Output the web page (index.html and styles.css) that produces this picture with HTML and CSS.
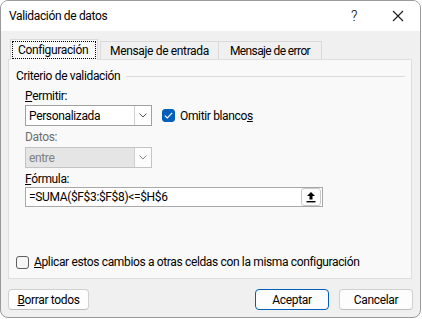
FILE: index.html
```html
<!DOCTYPE html>
<html lang="es">
<head>
  <meta charset="UTF-8" />
  <title>Validación de datos</title>
  <link rel="stylesheet" href="styles.css">
</head>
<body>
  <div class="window">
    <div class="titlebar">
      <span class="title">Validación de datos</span>
      <span class="help">?</span>
      <span class="close">
        <svg width="12" height="12" viewBox="0 0 12 12"><path d="M1 1L11 11M11 1L1 11" stroke="#1a1a1a" stroke-width="1.1" fill="none"/></svg>
      </span>
    </div>

    <div class="dialog">
      <div class="tabs">
        <div class="tab active"><span class="focus">Configuración</span></div>
        <div class="tab tab-entrada">Mensaje de entrada</div>
        <div class="tab tab-error">Mensaje de error</div>
      </div>

      <div class="panel">
        <div class="group-head">
          <span>Criterio de validación</span>
          <span class="rule"></span>
        </div>

        <div class="label"><u>P</u>ermitir:</div>
        <div class="row">
          <div class="select">
            <span class="value">Personalizada</span>
            <span class="arrow">
              <svg width="8" height="5" viewBox="0 0 8 5"><path d="M0.5 0.5L4 4L7.5 0.5" stroke="#555" fill="none"/></svg>
            </span>
          </div>
          <div class="check">
            <span class="box checked">
              <svg width="9" height="7" viewBox="0 0 9 7"><path d="M0.8 3.6L3.3 6L8.2 0.9" stroke="#fff" stroke-width="1.2" fill="none"/></svg>
            </span>
            <span>Omitir blanco<u>s</u></span>
          </div>
        </div>

        <div class="label disabled">Datos:</div>
        <div class="select disabled">
          <span class="value">entre</span>
          <span class="arrow">
            <svg width="8" height="5" viewBox="0 0 8 5"><path d="M0.5 0.5L4 4L7.5 0.5" stroke="#888" fill="none"/></svg>
          </span>
        </div>

        <div class="label formula-label"><u>F</u>órmula:</div>
        <div class="input">
          <span class="value">=SUMA($F$3:$F$8)&lt;=$H$6</span>
          <span class="ref-btn">
            <svg width="10" height="12" viewBox="0 0 10 12"><path d="M5 1L1 5H3.5V8.5H6.5V5H9Z" fill="#000"/><rect x="0.5" y="10" width="9" height="1.4" fill="#000"/></svg>
          </span>
        </div>

        <div class="check apply">
          <span class="box"></span>
          <span><u>A</u>plicar estos cambios a otras celdas con la misma configuración</span>
        </div>
      </div>

      <div class="footer">
        <button class="btn"><u>B</u>orrar todos</button>
        <div class="footer-right">
          <button class="btn primary">Aceptar</button>
          <button class="btn">Cancelar</button>
        </div>
      </div>
    </div>
  </div>
</body>
</html>
```

FILE: styles.css
```css
body {
  margin: 0;
  background: #fff;
  font-family: Roboto, "Liberation Sans", sans-serif;
  font-size: 12px;
  letter-spacing: -0.35px;
  color: #000;
}

.window {
  width: 421px;
  height: 318px;
  box-sizing: border-box;
  border: 1px solid #9a9a9a;
  border-radius: 8px;
  background: #f0f0f0;
  overflow: hidden;
}

.titlebar {
  height: 30px;
  background: #fff;
  display: flex;
  align-items: center;
  padding-left: 8px;
}

.title {
  flex: 1;
}

.help {
  width: 44px;
  text-align: center;
  font-size: 14px;
  font-weight: 300;
}

.close {
  width: 44px;
  display: flex;
  justify-content: center;
}

.dialog {
  padding: 9px 7px 0 7px;
}

/* tabs */
.tabs {
  display: flex;
  align-items: flex-end;
  padding-left: 2px;
  height: 19px;
  position: relative;
  z-index: 1;
}

.tab {
  flex-shrink: 0;
  height: 18px;
  box-sizing: border-box;
  border: 1px solid #d9d9d9;
  border-bottom: none;
  background: #f0f0f0;
  display: flex;
  align-items: center;
  justify-content: center;
  overflow: hidden;
  white-space: nowrap;
}

.tab-entrada {
  width: 119px;
}

.tab-error {
  width: 104px;
  margin-left: -1px;
  letter-spacing: -0.6px;
}

.tab.active {
  height: 21px;
  margin-bottom: -1px;
  margin-right: 2px;
  background: #f9f9f9;
  padding: 0 1px;
  width: 88px;
}

.focus {
  flex: 1;
  height: 16px;
  border: 1px dotted #000;
  display: flex;
  align-items: center;
  padding-left: 5px;
}

.panel {
  height: 220px;
  box-sizing: border-box;
  border: 1px solid #dedede;
  background: #f9f9f9;
  padding: 8px 0 0 16px;
  display: flex;
  flex-direction: column;
  margin-right: 1px;
}

.group-head {
  display: flex;
  align-items: center;
  height: 16px;
  margin-left: -9px;
  margin-right: 6px;
}

.rule {
  flex: 1;
  height: 1px;
  background: #dcdcdc;
  margin-left: 6px;
}

.label {
  height: 16px;
  line-height: 16px;
  margin-top: 4px;
}

.label.disabled {
  color: #6d6d6d;
  margin-top: 3px;
}

.formula-label {
  margin-top: 3px;
}

.row {
  display: flex;
  align-items: center;
  margin-top: 1px;
}

.select {
  width: 127px;
  height: 21px;
  box-sizing: border-box;
  border: 1px solid #a0a0a0;
  background: #fff;
  display: flex;
  align-items: stretch;
}

.select .value {
  flex: 1;
  padding-left: 3px;
  display: flex;
  align-items: center;
}

.select .arrow {
  width: 16px;
  border-left: 1px solid #cfcfcf;
  background: #fff;
  display: flex;
  align-items: center;
  justify-content: center;
}

.select.disabled {
  margin-top: 2px;
  background: #e5e5e5;
  border-color: #c4c4c4;
  color: #808080;
}

.select.disabled .arrow {
  background: #fcfcfc;
}

.check {
  display: flex;
  align-items: center;
}

.row .check {
  margin-left: 10px;
}

.box {
  width: 13px;
  height: 13px;
  box-sizing: border-box;
  border: 1px solid #5e5e5e;
  border-radius: 3px;
  margin-right: 5px;
  background: #f6f6f6;
  display: flex;
  align-items: center;
  justify-content: center;
}

.box.checked {
  background: #005fb8;
  border-color: #005fb8;
}

.input {
  width: 298px;
  height: 20px;
  box-sizing: border-box;
  border: 1px solid #a8a8a8;
  background: #fff;
  display: flex;
  align-items: center;
}

.input .value {
  flex: 1;
  padding-left: 3px;
}

.ref-btn {
  width: 20px;
  height: 18px;
  box-sizing: border-box;
  border: 1px solid #c8c8c8;
  border-radius: 3px;
  margin-right: 1px;
  background: #fdfdfd;
  display: flex;
  align-items: center;
  justify-content: center;
}

.check.apply {
  margin-top: auto;
  margin-bottom: 9px;
  margin-left: -9px;
}

.footer {
  display: flex;
  justify-content: space-between;
  margin-top: 10px;
}

.footer-right {
  display: flex;
  gap: 10px;
}

.btn {
  font-family: inherit;
  font-size: 12px;
  letter-spacing: inherit;
  color: #000;
  height: 21px;
  padding: 0;
  border: 1px solid #d0d0d0;
  border-bottom-color: #bdbdbd;
  border-radius: 4px;
  background: #fdfdfd;
  width: 81px;
}

.footer-right .btn {
  width: 74px;
}

.btn.primary {
  border-color: #005fb8;
}
```
